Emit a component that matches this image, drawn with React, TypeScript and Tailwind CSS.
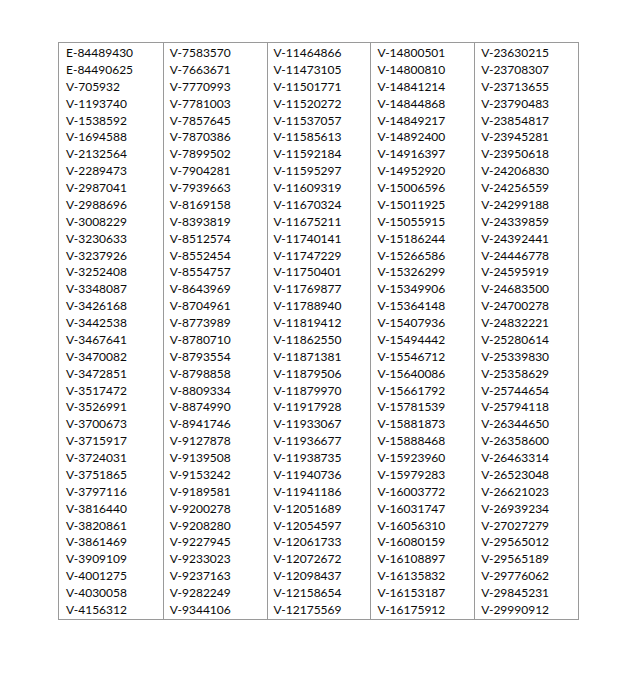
const columns: string[][] = [
  [
    "E-84489430", "E-84490625", "V-705932", "V-1193740", "V-1538592", "V-1694588", "V-2132564", "V-2289473",
    "V-2987041", "V-2988696", "V-3008229", "V-3230633", "V-3237926", "V-3252408", "V-3348087", "V-3426168",
    "V-3442538", "V-3467641", "V-3470082", "V-3472851", "V-3517472", "V-3526991", "V-3700673", "V-3715917",
    "V-3724031", "V-3751865", "V-3797116", "V-3816440", "V-3820861", "V-3861469", "V-3909109", "V-4001275",
    "V-4030058", "V-4156312",
  ],
  [
    "V-7583570", "V-7663671", "V-7770993", "V-7781003", "V-7857645", "V-7870386", "V-7899502", "V-7904281",
    "V-7939663", "V-8169158", "V-8393819", "V-8512574", "V-8552454", "V-8554757", "V-8643969", "V-8704961",
    "V-8773989", "V-8780710", "V-8793554", "V-8798858", "V-8809334", "V-8874990", "V-8941746", "V-9127878",
    "V-9139508", "V-9153242", "V-9189581", "V-9200278", "V-9208280", "V-9227945", "V-9233023", "V-9237163",
    "V-9282249", "V-9344106",
  ],
  [
    "V-11464866", "V-11473105", "V-11501771", "V-11520272", "V-11537057", "V-11585613", "V-11592184", "V-11595297",
    "V-11609319", "V-11670324", "V-11675211", "V-11740141", "V-11747229", "V-11750401", "V-11769877", "V-11788940",
    "V-11819412", "V-11862550", "V-11871381", "V-11879506", "V-11879970", "V-11917928", "V-11933067", "V-11936677",
    "V-11938735", "V-11940736", "V-11941186", "V-12051689", "V-12054597", "V-12061733", "V-12072672", "V-12098437",
    "V-12158654", "V-12175569",
  ],
  [
    "V-14800501", "V-14800810", "V-14841214", "V-14844868", "V-14849217", "V-14892400", "V-14916397", "V-14952920",
    "V-15006596", "V-15011925", "V-15055915", "V-15186244", "V-15266586", "V-15326299", "V-15349906", "V-15364148",
    "V-15407936", "V-15494442", "V-15546712", "V-15640086", "V-15661792", "V-15781539", "V-15881873", "V-15888468",
    "V-15923960", "V-15979283", "V-16003772", "V-16031747", "V-16056310", "V-16080159", "V-16108897", "V-16135832",
    "V-16153187", "V-16175912",
  ],
  [
    "V-23630215", "V-23708307", "V-23713655", "V-23790483", "V-23854817", "V-23945281", "V-23950618", "V-24206830",
    "V-24256559", "V-24299188", "V-24339859", "V-24392441", "V-24446778", "V-24595919", "V-24683500", "V-24700278",
    "V-24832221", "V-25280614", "V-25339830", "V-25358629", "V-25744654", "V-25794118", "V-26344650", "V-26358600",
    "V-26463314", "V-26523048", "V-26621023", "V-26939234", "V-27027279", "V-29565012", "V-29565189", "V-29776062",
    "V-29845231", "V-29990912",
  ],
]

export default function App() {
  return (
    <div className="w-[630px] h-[680px] bg-white pt-[42px] pl-[58px]">
      {/* Table of registration numbers */}
      <div
        className="flex w-[521px] border border-[#9a9a9a] text-[12px] leading-[16.88px] text-[#0a0a0a]"
        style={{ fontFamily: "Lato, 'Open Sans', sans-serif" }}
      >
        {columns.map((col, i) => (
          <div
            key={i}
            className={
              i === 0
                ? "w-[104px] pl-[7px] pt-[2px]"
                : "w-[104px] pl-[6px] pt-[2px] border-l border-[#9a9a9a]"
            }
          >
            {col.map((id) => (
              <div key={id}>{id}</div>
            ))}
          </div>
        ))}
      </div>
    </div>
  )
}
